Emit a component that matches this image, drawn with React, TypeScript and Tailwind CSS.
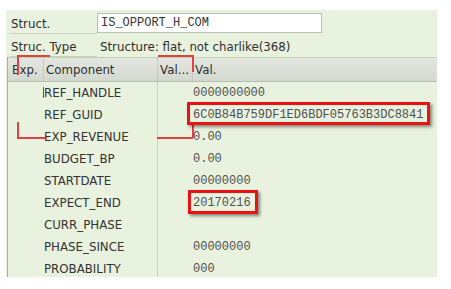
import React from "react";

const rows: { name: string; value: string }[] = [
  { name: "REF_HANDLE", value: "0000000000" },
  { name: "REF_GUID", value: "6C0B84B759DF1ED6BDF05763B3DC8841" },
  { name: "EXP_REVENUE", value: "0.00" },
  { name: "BUDGET_BP", value: "0.00" },
  { name: "STARTDATE", value: "00000000" },
  { name: "EXPECT_END", value: "20170216" },
  { name: "CURR_PHASE", value: "" },
  { name: "PHASE_SINCE", value: "00000000" },
  { name: "PROBABILITY", value: "000" },
];

const sans = { fontFamily: '"DejaVu Sans", Verdana, sans-serif' };
const mono = { fontFamily: '"Liberation Mono", "Courier New", monospace' };

export default function App() {
  return (
    <div className="relative w-[451px] h-[289px] bg-white overflow-hidden">
      <div
        className="mt-[10px] ml-[6px] w-[431px] h-[267px] bg-[#e9f2df] overflow-hidden flex flex-col text-[11.8px] text-[#2e2e2e]"
        style={sans}
      >
        {/* Row 1 */}
        <div className="flex h-[24px] shrink-0">
          <div className="ml-[4px] w-[87px] border-b border-[#c8d4bd] pl-[1px] pt-[5px] leading-[18px]">Struct.</div>
          <div
            className="mt-[3px] w-[225px] h-[20px] border border-[#b9c0b4] bg-white pl-[3px] text-[12px] leading-[18px] text-[#333]"
            style={mono}
          >
            IS_OPPORT_H_COM
          </div>
        </div>
        {/* Row 2 */}
        <div className="flex h-[23px] shrink-0">
          <div className="ml-[4px] w-[87px] border-b border-[#c8d4bd] pl-[1px] pt-[4px] leading-[18px]">Struc. Type</div>
          <div className="pl-[3px] pt-[4px] leading-[18px]">Structure: flat, not charlike(368)</div>
        </div>
        {/* Table */}
        <div className="ml-[1px] flex-1 flex flex-col border-l border-[#a9b1a6]">
          <div className="h-[1px] bg-[#bfd3ad] shrink-0" />
          <div className="flex h-[24px] shrink-0 bg-gradient-to-b from-[#e4e7e1] to-[#d3d8cf] border-b border-[#b7bdb3] leading-[24px]">
            <div className="w-[36px] pl-[4px] border-r border-[#c5cac1]">Exp.</div>
            <div className="w-[114px] pl-[2px] border-r border-[#c5cac1]">Component</div>
            <div className="w-[35px] pl-[2px] border-r border-[#c5cac1]">Val...</div>
            <div className="flex-1 pl-[2px]">Val.</div>
          </div>
          {rows.map((r) => (
            <div key={r.name} className="flex h-[22px] shrink-0 leading-[23px]">
              <div className="w-[36px]" />
              <div className="w-[114px] border-r border-[#c9d0c2] text-[#333]">{r.name}</div>
              <div className="w-[35px]" />
              <div className="flex-1 text-[12px] text-[#505050]" style={mono}>
                {r.value}
              </div>
            </div>
          ))}
        </div>
      </div>

      {/* cursor mark before REF_HANDLE */}
      <div className="absolute left-[43px] top-[87px] w-[1px] h-[11px] bg-[#555]" />

      {/* red annotation line 1 */}
      <div className="absolute left-[17px] top-[55px] w-[33px] h-[1.5px] bg-[#e24040]" />
      <div className="absolute left-[17px] top-[55px] w-[1.5px] h-[20px] bg-[#e24040]" />
      <div className="absolute left-[17px] top-[122px] w-[1.5px] h-[16px] bg-[#e24040]" />
      <div className="absolute left-[17px] top-[137px] w-[30px] h-[1.5px] bg-[#e24040]" />

      {/* red annotation line 2 */}
      <div className="absolute left-[158px] top-[55px] w-[35px] h-[1.5px] bg-[#e24040]" />
      <div className="absolute left-[192px] top-[55px] w-[1.5px] h-[17px] bg-[#e24040]" />
      <div className="absolute left-[192px] top-[124px] w-[1.5px] h-[14px] bg-[#e24040]" />
      <div className="absolute left-[157px] top-[137px] w-[36px] h-[1.5px] bg-[#e24040]" />

      {/* red boxes */}
      <div className="absolute left-[187px] top-[102px] w-[243px] h-[23px] border-[3px] border-[#ee1111] shadow-[2px_2px_3px_rgba(0,0,0,0.45)]" />
      <div className="absolute left-[188px] top-[190px] w-[70px] h-[24px] border-[3px] border-[#ee1111] shadow-[2px_2px_3px_rgba(0,0,0,0.45)]" />
    </div>
  );
}
